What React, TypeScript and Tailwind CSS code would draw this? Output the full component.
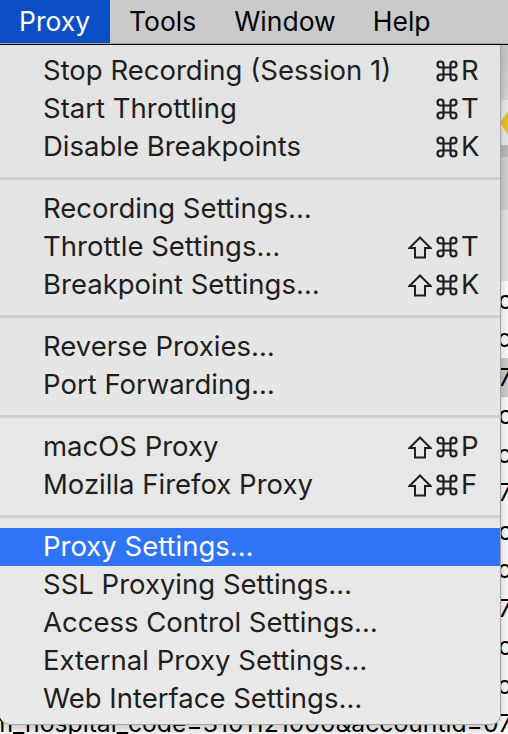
import React from "react";

type Item = { label: string; keys?: string[]; active?: boolean };

const groups: Item[][] = [
  [
    { label: "Stop Recording (Session 1)", keys: ["", "cmd", "R"] },
    { label: "Start Throttling", keys: ["", "cmd", "T"] },
    { label: "Disable Breakpoints", keys: ["", "cmd", "K"] },
  ],
  [
    { label: "Recording Settings…" },
    { label: "Throttle Settings…", keys: ["shift", "cmd", "T"] },
    { label: "Breakpoint Settings…", keys: ["shift", "cmd", "K"] },
  ],
  [{ label: "Reverse Proxies…" }, { label: "Port Forwarding…" }],
  [
    { label: "macOS Proxy", keys: ["shift", "cmd", "P"] },
    { label: "Mozilla Firefox Proxy", keys: ["shift", "cmd", "F"] },
  ],
  [
    { label: "Proxy Settings…", active: true },
    { label: "SSL Proxying Settings…" },
    { label: "Access Control Settings…" },
    { label: "External Proxy Settings…" },
    { label: "Web Interface Settings…" },
  ],
];

const bgRows = [
  "m_hospital_code=3101121000&ac",
  "m_hospital_code=3101121000&o",
  "m_hospital_code=3101121000&accountid=07",
  "m_hospital_code=3101121000&ac",
  "m_hospital_code=3101121000&o",
  "m_hospital_code=3101121000&accountid=07",
  "m_hospital_code=3101121000&ac",
  "m_hospital_code=3101121000&o",
  "m_hospital_code=3101121000&accountid=07",
  "m_hospital_code=3101121000&ac",
  "m_hospital_code=3101121000&o",
  "m_hospital_code=3101121000&accountid=07",
];

function ShiftIcon({ color }: { color: string }) {
  return (
    <svg width="24" height="23" viewBox="0 0 24 23" fill="none">
      <path
        d="M12 1.5 L22.5 12 H17 V21.5 H7 V12 H1.5 Z"
        stroke={color}
        strokeWidth="2"
        strokeLinejoin="miter"
      />
    </svg>
  );
}

function CmdIcon({ color }: { color: string }) {
  return (
    <svg width="22" height="22" viewBox="0 0 22 22" fill="none">
      <path
        d="M14.5 4.5 v13 a3 3 0 1 0 3 -3 H4.5 a3 3 0 1 0 3 3 V4.5 a3 3 0 1 0 -3 3 h13 a3 3 0 1 0 -3 -3"
        stroke={color}
        strokeWidth="2.2"
        strokeLinecap="round"
        strokeLinejoin="round"
      />
    </svg>
  );
}

function Shortcut({ keys, active }: { keys: string[]; active?: boolean }) {
  const col = active ? "#ffffff" : "#1e1e1e";
  return (
    <div className={`flex items-center ${active ? "text-white" : "text-[#1e1e1e]"}`}>
      <span className="flex w-[28px] items-center">{keys[0] === "shift" && <ShiftIcon color={col} />}</span>
      <span className="flex w-[25px] items-center">{keys[1] === "cmd" && <CmdIcon color={col} />}</span>
      <span className="w-[19px] text-[27.5px] leading-none">{keys[2]}</span>
    </div>
  );
}

export default function App() {
  return (
    <div className="relative w-[508px] h-[734px] overflow-hidden bg-white font-['Inter',sans-serif]">
      {/* menu bar */}
      <div className="flex h-[44px] items-center bg-[#cacaca] border-b border-[#acacac] text-[26.5px] text-black">
        <div className="flex h-full w-[110px] items-center bg-[#0c4ec6] pl-[19px] text-white">Proxy</div>
        <div className="pl-[19px]">Tools</div>
        <div className="pl-[38px]">Window</div>
        <div className="pl-[37px]">Help</div>
      </div>

      {/* background window */}
      <div className="flex flex-col border-t border-black">
        <div className="h-[55px] bg-gradient-to-b from-[#c6c6c6] to-[#dadada]" />
        <div className="flex h-[45px] items-center justify-end bg-[#eeeeee]">
          <svg width="14" height="26" viewBox="0 0 14 26" className="-mr-[6px]">
            <path d="M0 13 L8 1 H14 V25 H8 Z" fill="#f2c12e" />
          </svg>
        </div>
        <div className="h-[12px] bg-[#bdbdbd]" />
        <div className="h-[53px] bg-[#d6d6d6]" />
        <div className="h-[71px] bg-[#e8e8e8]" />
        <div className="flex flex-col">
          {bgRows.map((t, i) => (
            <div
              key={i}
              className={`flex h-[38.5px] w-[512px] items-center justify-end whitespace-nowrap text-[24.7px] text-black ${
                i === 2 ? "bg-[#cfcfcf]" : ""
              }`}
            >
              {t}
            </div>
          ))}
        </div>
      </div>

      {/* dropdown menu */}
      <div className="absolute left-0 top-[45px] w-[501px] rounded-b-[10px] border-r border-b border-[#a4a4a4] bg-gradient-to-b from-[#e3e3e3] to-[#e9e9e9] pt-[7px] pb-[6px] shadow-[0_4px_12px_rgba(0,0,0,0.25)]">
        {groups.map((g, gi) => (
          <div key={gi}>
            {gi > 0 && (
              <div className="flex h-[24px] items-center">
                <div className="h-[3px] w-full bg-[#cfcfcf]" />
              </div>
            )}
            {g.map((it) => (
              <div
                key={it.label}
                className={`flex h-[38px] items-center justify-between pl-[43px] pr-[20px] text-[27.5px] ${
                  it.active ? "bg-[#2f74f7] text-white" : "text-[#1e1e1e]"
                }`}
              >
                <span className="whitespace-nowrap">{it.label}</span>
                {it.keys && <Shortcut keys={it.keys} active={it.active} />}
              </div>
            ))}
          </div>
        ))}
      </div>
    </div>
  );
}
